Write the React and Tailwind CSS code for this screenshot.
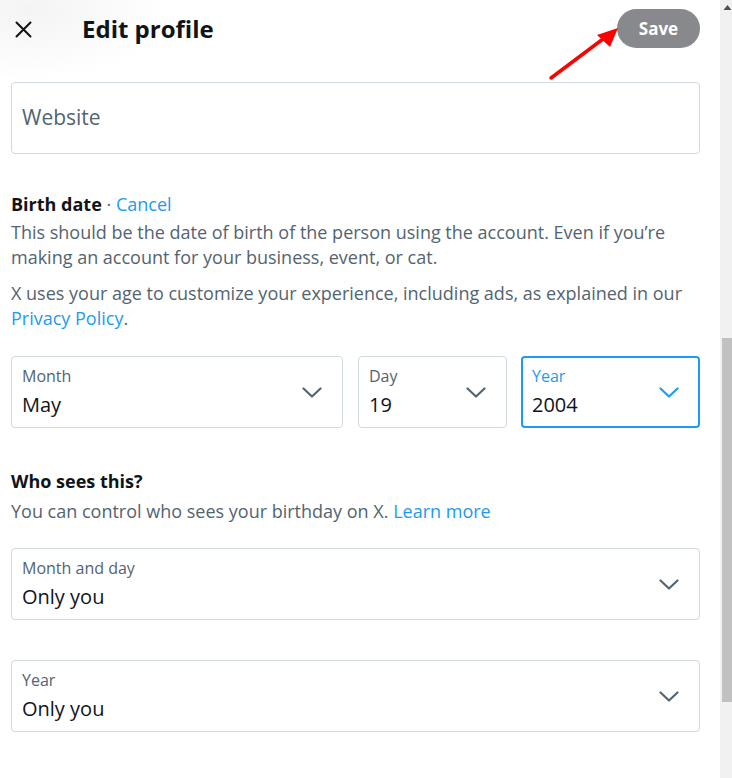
import React from "react";

const Chevron = ({ color = "#536471" }) => (
  <svg width="20" height="12" viewBox="0 0 20 12" fill="none" className="mt-[2px]">
    <path d="M1.5 1.5 L10 9.5 L18.5 1.5" stroke={color} strokeWidth="2.2" strokeLinecap="round" strokeLinejoin="round" />
  </svg>
);

const Select = ({ label, value, active, className = "" }) => (
  <div
    className={`flex h-[72px] items-center justify-between rounded-[4px] ${
      active ? "border-2 border-[#1d9bf0] pl-[9px] pr-[19px]" : "border border-[#cfd9de] pl-[10px] pr-[20px]"
    } ${className}`}
  >
    <div className="flex flex-col">
      <span className={`text-[16px] leading-[20px] ${active ? "text-[#1d9bf0]" : "text-[#536471]"}`}>{label}</span>
      <span className="mt-[6px] text-[20px] leading-[26px] text-[#0f1419]">{value}</span>
    </div>
    <Chevron color={active ? "#1d9bf0" : "#536471"} />
  </div>
);

export default function App() {
  return (
    <div
      className="relative flex h-[778px] w-[732px] overflow-hidden bg-white"
      style={{ fontFamily: "'Open Sans', 'Noto Sans', sans-serif" }}
    >
      <div className="flex flex-1 flex-col bg-[radial-gradient(ellipse_140px_70px_at_30px_10px,#f4f4f4_0%,#ffffff_100%)]">
        <div className="flex h-[57px] items-center pl-[15px] pr-[20px]">
          <svg width="17" height="17" viewBox="0 0 17 17" className="mt-[1px]">
            <path d="M1.5 1.5 L15.5 15.5 M15.5 1.5 L1.5 15.5" stroke="#0f1419" strokeWidth="2" strokeLinecap="round" />
          </svg>
          <span className="ml-[50px] text-[24px] font-bold leading-[30px] text-[#0f1419]">Edit profile</span>
          <div className="ml-auto flex h-[39px] w-[83px] items-center justify-center rounded-full bg-[#87898c] text-[17px] font-bold text-white">
            Save
          </div>
        </div>

        <div className="flex flex-col pl-[11px] pr-[20px]">
          <div className="mt-[25px] flex h-[72px] items-center rounded-[4px] border border-[#cfd9de] px-[10px]">
            <span className="text-[21px] text-[#536471]">Website</span>
          </div>

          <div className="mt-[38px] text-[18px] leading-[24px]">
            <span className="font-bold text-[#0f1419]">Birth date</span>
            <span className="text-[#536471]"> · </span>
            <span className="text-[#1d9bf0]">Cancel</span>
          </div>
          <p className="mt-[4px] text-[18px] leading-[25px] text-[#536471]">
            This should be the date of birth of the person using the account. Even if you’re making an account for your business, event, or cat.
          </p>
          <p className="mt-[11px] text-[18px] leading-[25px] text-[#536471]">
            X uses your age to customize your experience, including ads, as explained in our{" "}
            <span className="text-[#1d9bf0]">Privacy Policy</span>.
          </p>

          <div className="mt-[25px] flex">
            <Select label="Month" value="May" className="w-[332px]" />
            <Select label="Day" value="19" className="ml-[15px] w-[149px]" />
            <Select label="Year" value="2004" active className="ml-[14px] flex-1" />
          </div>

          <div className="mt-[41px] text-[18px] font-bold leading-[24px] text-[#0f1419]">Who sees this?</div>
          <p className="mt-[6px] text-[18px] leading-[25px] text-[#536471]">
            You can control who sees your birthday on X. <span className="text-[#1d9bf0]">Learn more</span>
          </p>

          <Select label="Month and day" value="Only you" className="mt-[24px]" />
          <Select label="Year" value="Only you" className="mt-[40px]" />
        </div>
      </div>

      <div className="flex w-[12px] flex-col bg-[#f1f1f1]">
        <svg width="12" height="12" viewBox="0 0 12 12" className="mt-[2px]">
          <path d="M6 3 L10 8 L2 8 Z" fill="#505050" transform="translate(1.5,0)" />
        </svg>
        <div className="ml-[2px] mt-[324px] h-[364px] w-[10px] bg-[#c1c1c1]" />
      </div>

      <svg className="pointer-events-none absolute left-0 top-0" width="732" height="778">
        <line x1="551" y1="78" x2="603" y2="39" stroke="#ff0000" strokeWidth="3.5" strokeLinecap="round" />
        <polygon points="618,28 597,35 610,47" fill="#ff0000" />
      </svg>
    </div>
  );
}
